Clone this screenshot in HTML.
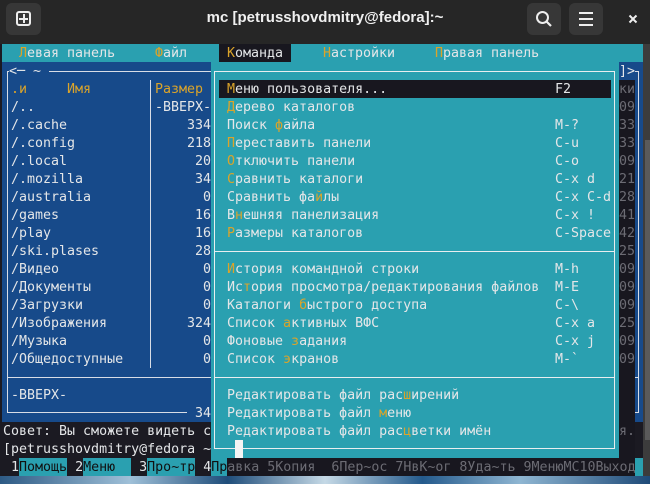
<!DOCTYPE html>
<html><head><meta charset="utf-8"><style>
*{margin:0;padding:0;box-sizing:border-box}
body{width:650px;height:484px;overflow:hidden;background:#1b1a22;position:relative;font-family:"DejaVu Sans Mono","Liberation Mono",monospace;font-size:13.3px}
.a{position:absolute}
.t{position:absolute;white-space:pre;line-height:18px;padding-top:1px}
.w{color:#e4e6e8}.y{color:#dba42a}.k{color:#111}.g{color:#6c6c74}
</style></head><body>
<div class="a" style="left:0;top:476px;width:650px;height:8px;background:linear-gradient(90deg,#2d5a84,#9fc0d8 20%,#1f4d7a 35%,#c5d9e6 50%,#245a8c 65%,#8fb6d2 80%,#1e4a78)"></div>
<div class="a" style="left:0;top:0;width:650px;height:44px;background:#262626"></div>
<div class="a" style="left:6px;top:3px;width:35px;height:32px;background:#373737;border-radius:6px"></div>
<div class="a" style="left:16px;top:11px;width:15px;height:15px;border:2px solid #eee;border-radius:3px"></div>
<div class="a" style="left:22.5px;top:14px;width:2px;height:9px;background:#eee"></div>
<div class="a" style="left:19px;top:17.5px;width:9px;height:2px;background:#eee"></div>
<div class="a" style="left:0;top:9px;width:650px;text-align:center;font-family:'Liberation Sans',sans-serif;font-weight:bold;font-size:15px;color:#f0f0f0">mc [petrusshovdmitry@fedora]:~</div>
<div class="a" style="left:527px;top:3px;width:34px;height:32px;background:#373737;border-radius:6px"></div>
<svg class="a" style="left:534px;top:9px" width="20" height="20"><circle cx="8.5" cy="8.5" r="5.5" fill="none" stroke="#eee" stroke-width="2"/><line x1="12.5" y1="12.5" x2="17" y2="17" stroke="#eee" stroke-width="2.2"/></svg>
<div class="a" style="left:569px;top:3px;width:34px;height:32px;background:#373737;border-radius:6px"></div>
<div class="a" style="left:579px;top:12px;width:14px;height:2px;background:#eee"></div>
<div class="a" style="left:579px;top:18px;width:14px;height:2px;background:#eee"></div>
<div class="a" style="left:579px;top:24px;width:14px;height:2px;background:#eee"></div>
<svg class="a" style="left:628px;top:14px" width="10" height="10"><path d="M1.5 1.5L8.5 8.5M8.5 1.5L1.5 8.5" stroke="#eee" stroke-width="2"/></svg>
<div class="a" style="left:643px;top:44px;width:7px;height:432px;background:#3c3c3c"></div>
<div class="a" style="left:645px;top:140px;width:5px;height:300px;background:#5a5a5a"></div>
<div class="a" style="left:2px;top:44px;width:641px;height:18px;background:#2aa0b0"></div>
<div class="a" style="left:219px;top:44px;width:72px;height:18px;background:#18171f"></div>
<div class="t" style="left:19px;top:44px"><span class="y">Л</span><span class="w">евая панель</span></div>
<div class="t" style="left:155px;top:44px"><span class="y">Ф</span><span class="w">айл</span></div>
<div class="t" style="left:227px;top:44px"><span class="y">К</span><span class="w">оманда</span></div>
<div class="t" style="left:323px;top:44px"><span class="y">Н</span><span class="w">астройки</span></div>
<div class="t" style="left:435px;top:44px"><span class="y">П</span><span class="w">равая панель</span></div>
<div class="a" style="left:2px;top:62px;width:209px;height:360px;background:#174a8a"></div>
<div class="a" style="left:7px;top:71px;width:204px;height:342px;border-left:1px solid #d8dde6;border-top:1px solid #d8dde6;border-bottom:1px solid #d8dde6"></div>
<div class="a" style="left:8px;top:377px;width:203px;height:1px;background:#d8dde6"></div>
<div class="a" style="left:150px;top:80px;width:1px;height:288px;background:#d8dde6"></div>
<div class="t w" style="left:9px;top:62px;line-height:17px;background:#174a8a">&lt;─ ~ </div>
<div class="t" style="left:11px;top:80px"><span class="y">.и     Имя</span></div>
<div class="t y" style="left:155px;top:80px">Размер</div>
<div class="t w" style="left:155px;top:98px">-ВВЕРХ-</div>
<div class="t w" style="left:11px;top:98px">/..
/.cache
/.config
/.local
/.mozilla
/australia
/games
/play
/ski.plases
/Видео
/Документы
/Загрузки
/Изображения
/Музыка
/Общедоступные</div>
<div class="t w" style="left:155px;top:116px;text-align:right;width:56px">334
218
20
34
0
16
16
28
0
0
0
324
0
0</div>
<div class="t w" style="left:11px;top:386px">-ВВЕРХ-</div>
<div class="t w" style="left:187px;top:404px;line-height:17px;background:#174a8a"> 34</div>
<div class="t w" style="left:3px;top:422px">Совет: Вы сможете видеть с</div>
<div class="t w" style="left:3px;top:440px">[petrusshovdmitry@fedora ~</div>
<div class="a" style="left:611px;top:62px;width:32px;height:360px;background:#174a8a"></div>
<div class="a" style="left:611px;top:71px;width:28px;height:342px;border-right:1px solid #d8dde6;border-top:1px solid #d8dde6;border-bottom:1px solid #d8dde6"></div>
<div class="a" style="left:611px;top:377px;width:28px;height:1px;background:#d8dde6"></div>
<div class="t w" style="left:619px;top:62px;line-height:17px;background:#174a8a">]&gt;</div>
<div class="a" style="left:619px;top:80px;width:16px;height:378px;background:#18171f"></div>
<div class="a" style="left:227px;top:458px;width:408px;height:18px;background:#18171f"></div>
<div class="t g" style="left:619px;top:80px">ки
09
33
33
09
21
28
41
42
25
09
09
09
25
09
09</div>
<div class="t g" style="left:619px;top:422px">я.</div>
<div class="a" style="left:211px;top:62px;width:408px;height:396px;background:#2aa0b0"></div>
<div class="a" style="left:214px;top:71px;width:401px;height:378px;border:1px solid #e8eef0"></div>
<div class="a" style="left:214px;top:251px;width:401px;height:1px;background:#e8eef0"></div>
<div class="a" style="left:214px;top:377px;width:401px;height:1px;background:#e8eef0"></div>
<div class="a" style="left:219px;top:80px;width:392px;height:18px;background:#18171f"></div>
<div class="t w" style="left:227px;top:80px"><span class="y">М</span>еню пользователя...</div>
<div class="t w" style="left:227px;top:98px"><span class="y">Д</span>ерево каталогов</div>
<div class="t w" style="left:227px;top:116px">Поиск <span class="y">ф</span>айла</div>
<div class="t w" style="left:227px;top:134px"><span class="y">П</span>ереставить панели</div>
<div class="t w" style="left:227px;top:152px"><span class="y">О</span>тключить панели</div>
<div class="t w" style="left:227px;top:170px"><span class="y">С</span>равнить каталоги</div>
<div class="t w" style="left:227px;top:188px">Сравнить фа<span class="y">й</span>лы</div>
<div class="t w" style="left:227px;top:206px">В<span class="y">н</span>ешняя панелизация</div>
<div class="t w" style="left:227px;top:224px"><span class="y">Р</span>азмеры каталогов</div>
<div class="t w" style="left:227px;top:260px"><span class="y">И</span>стория командной строки</div>
<div class="t w" style="left:227px;top:278px">Ис<span class="y">т</span>ория просмотра/редактирования файлов</div>
<div class="t w" style="left:227px;top:296px">Каталоги <span class="y">б</span>ыстрого доступа</div>
<div class="t w" style="left:227px;top:314px">Список <span class="y">а</span>ктивных ВФС</div>
<div class="t w" style="left:227px;top:332px">Фоновые <span class="y">з</span>адания</div>
<div class="t w" style="left:227px;top:350px">Список <span class="y">э</span>кранов</div>
<div class="t w" style="left:227px;top:386px">Редактировать файл рас<span class="y">ш</span>ирений</div>
<div class="t w" style="left:227px;top:404px">Редактировать файл <span class="y">м</span>еню</div>
<div class="t w" style="left:227px;top:422px">Редактировать файл рас<span class="y">ц</span>ветки имён</div>
<div class="t w" style="left:555px;top:80px">F2</div>
<div class="t w" style="left:555px;top:116px">M-?
C-u
C-o
C-x d
C-x C-d
C-x !
C-Space</div>
<div class="t w" style="left:555px;top:260px">M-h
M-E
C-\
C-x a
C-x j
M-`</div>
<div class="a" style="left:235px;top:440px;width:8px;height:18px;background:#f4f4f4"></div>
<div class="a" style="left:19px;top:458px;width:48px;height:18px;background:#2aa0b0"></div>
<div class="a" style="left:83px;top:458px;width:48px;height:18px;background:#2aa0b0"></div>
<div class="a" style="left:147px;top:458px;width:48px;height:18px;background:#2aa0b0"></div>
<div class="a" style="left:211px;top:458px;width:16px;height:18px;background:#2aa0b0"></div>
<div class="a" style="left:635px;top:458px;width:8px;height:18px;background:#2aa0b0"></div>
<div class="t" style="left:11px;top:458px"><span class="w">1</span><span class="k">Помощь</span> <span class="w">2</span><span class="k">Меню  </span> <span class="w">3</span><span class="k">Про~тр</span> <span class="w">4</span><span class="k">Пр</span><span class="g">авка 5Копия  6Пер~ос 7НвК~ог 8Уда~ть 9МенюMC10Выход</span></div>
</body></html>
